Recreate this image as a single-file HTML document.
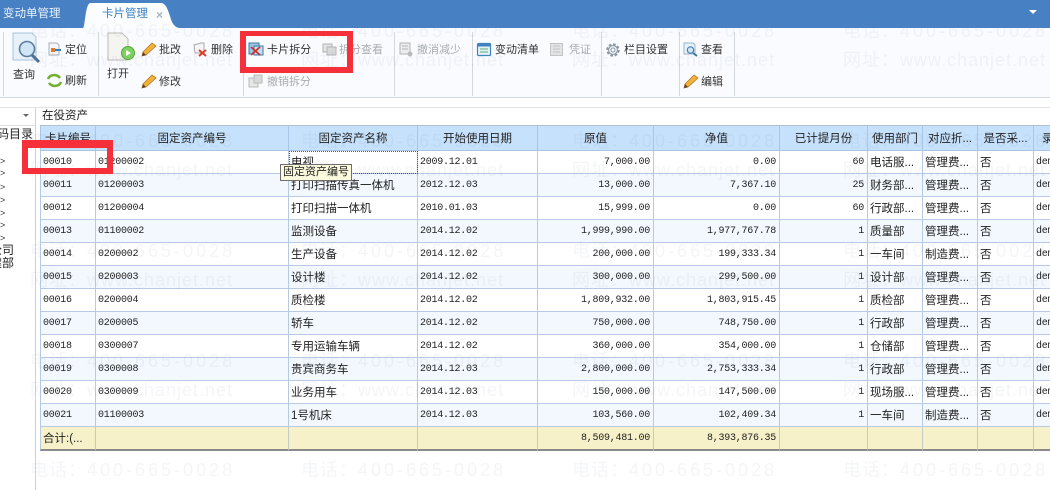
<!DOCTYPE html>
<html><head><meta charset="utf-8">
<style>
html,body{margin:0;padding:0;background:#fff}
#p{position:relative;width:1050px;height:490px;overflow:hidden;background:#fff;font-family:"Liberation Sans","WenQuanYi Zen Hei","Noto Sans CJK SC",sans-serif;font-size:11px;color:#222;filter:blur(.3px)}
.a{position:absolute}
.l{position:absolute;white-space:nowrap;font-size:11px;line-height:14px;color:#333}
.g{color:#a9adb0}
.s{position:absolute;top:32px;height:64px;width:1px;background:#d3d8dc}
table{border-collapse:separate;border-spacing:0;table-layout:fixed;width:1010px}
th{background:#c6e1fb;border-right:1px solid #a9c6e4;border-bottom:1px solid #a9c6e4;border-top:1px solid #b3c2d0;font-weight:normal;font-size:11.5px;color:#222;padding:0;overflow:hidden;white-space:nowrap;box-sizing:border-box;height:26px}
td{height:23px;box-sizing:border-box;border-right:1px solid #b6cae4;border-bottom:1px solid #b6cae4;padding:0 3px 0 2px;overflow:hidden;white-space:nowrap;font-size:11.5px;color:#222}
td:first-child{border-left:1px solid #b6cae4}
.n{font-family:"Liberation Mono",monospace;font-size:10px;letter-spacing:-.25px}
.r{text-align:right}
tr.e td{background:#f3f8fe}
tr.t td{background:#f7f1c9;border-right-color:#c4cbc0;border-bottom:2px solid #8b8b8b;height:24px}
td:last-child{padding-right:0;border-right:0}
.w{position:absolute;white-space:nowrap;font-size:18px;line-height:22px;letter-spacing:3px;color:rgba(110,125,150,.08)}
.w i{font-style:normal;letter-spacing:1px}
.w b{font-weight:normal;letter-spacing:1px}
.b{position:absolute;background:#f6303a}
svg{position:absolute;overflow:visible}
</style></head><body><div id="p">

<div class="a" style="left:0;top:0;width:1050px;height:28px;background:#4880c4"></div>
<div class="l" style="left:3px;top:7px;color:#e8f1fb;font-size:11.5px">变动单管理</div>
<svg style="left:82px;top:2px" width="100" height="27"><path d="M1 26 C3 26 3 3 8 1 L79 1 C85 1 87 12 90 20 C92 24 95 26 98 26 Z" fill="#fcfdff"/></svg>
<div class="l" style="left:102px;top:7px;color:#3d82c6;font-size:11.5px">卡片管理</div>
<div class="l" style="left:156px;top:8px;color:#a8b2bc;font-size:12px;font-weight:bold">×</div>
<svg style="left:1028px;top:9px" width="10" height="6"><path d="M1 1 L9 1 L5 5 Z" fill="#fff"/></svg>

<div class="a" style="left:0;top:28px;width:1050px;height:69px;background:#f9fbfe"></div>
<div class="a" style="left:0;top:97px;width:1050px;height:1px;background:#cfd7df"></div>
<div class="a" style="left:0;top:107px;width:1050px;height:1px;background:#dfe3e5"></div>

<div class="s" style="left:3px"></div><div class="s" style="left:98px"></div><div class="s" style="left:243px"></div><div class="s" style="left:394px"></div><div class="s" style="left:472px"></div><div class="s" style="left:601px"></div><div class="s" style="left:679px"></div><div class="s" style="left:734px"></div>

<!-- query -->
<svg style="left:12px;top:32px" width="30" height="32"><path d="M1 1 H20 L24 5 V28 H1 Z" fill="#e6f1fa" stroke="#a9c4da"/><circle cx="15" cy="17" r="7.5" fill="#cfe6f7" stroke="#5d7d9c" stroke-width="1.6"/><path d="M20 23 L27 30" stroke="#4a6f96" stroke-width="3"/></svg>
<div class="l" style="left:13px;top:68px">查询</div>
<svg style="left:48px;top:42px" width="14" height="14"><path d="M1 1 H9 L11 3 V13 H1 Z" fill="#f3f5f7" stroke="#a8b0b8"/><rect x="3" y="6" width="4" height="4" fill="#e07a30"/><path d="M7 8 H13" stroke="#2f80c8" stroke-width="2"/></svg>
<div class="l" style="left:65px;top:43px">定位</div>
<svg style="left:47px;top:73px" width="15" height="15"><path d="M1 6 C3 1 10 1 13 5 M14 9 C12 14 5 14 2 10" fill="none" stroke="#76b02e" stroke-width="2.6"/></svg>
<div class="l" style="left:65px;top:74px">刷新</div>
<!-- open -->
<svg style="left:107px;top:32px" width="28" height="32"><path d="M1 1 H15 L21 7 V28 H1 Z" fill="#f4f4f0" stroke="#bdbdb8"/><circle cx="21" cy="21" r="6.5" fill="#7ed15e" stroke="#59a63f"/><path d="M19 18 L24 21 L19 24 Z" fill="#fff"/></svg>
<div class="l" style="left:107px;top:67px">打开</div>
<svg style="left:141px;top:41px" width="16" height="16"><path d="M2 11 L11 2 L15 5 L5 14 L1 15 Z" fill="#f2b13a" stroke="#b57a22" stroke-width=".8"/><path d="M1 15 L2 11 L5 14 Z" fill="#543"/></svg>
<div class="l" style="left:159px;top:43px">批改</div>
<svg style="left:141px;top:73px" width="16" height="16"><path d="M2 11 L11 2 L15 5 L5 14 L1 15 Z" fill="#f2b13a" stroke="#b57a22" stroke-width=".8"/><path d="M1 15 L2 11 L5 14 Z" fill="#543"/></svg>
<div class="l" style="left:159px;top:75px">修改</div>
<svg style="left:193px;top:42px" width="15" height="15"><path d="M1 3 L8 1 H11 V11 H2 Z" fill="#f5f5f5" stroke="#aaa"/><path d="M6 8 L13 14 M13 8 L6 14" stroke="#e0392a" stroke-width="2"/></svg>
<div class="l" style="left:211px;top:43px">删除</div>
<!-- split -->
<svg style="left:248px;top:42px" width="16" height="15"><rect x="1" y="1" width="10" height="11" fill="#9cc6e6" stroke="#3f78a8"/><rect x="6" y="4" width="9" height="9" fill="#c4dcf0" stroke="#3f78a8"/><path d="M3 13 L12 5 M12 13 L3 5" stroke="#c8342c" stroke-width="1.8"/></svg>
<div class="l" style="left:267px;top:43px;letter-spacing:.1px">卡片拆分</div>
<svg style="left:322px;top:42px" width="15" height="15"><rect x="1" y="2" width="9" height="8" fill="#e4e6e6" stroke="#b0b4b4"/><rect x="5" y="5" width="9" height="8" fill="#d8dada" stroke="#b0b4b4"/></svg>
<div class="l g" style="left:339px;top:43px">拆分查看</div>
<svg style="left:248px;top:73px" width="15" height="16"><rect x="1" y="5" width="9" height="9" fill="#e4e6e6" stroke="#b8bcbc"/><rect x="6" y="2" width="8" height="8" fill="#d8dada" stroke="#b8bcbc"/></svg>
<div class="l g" style="left:267px;top:75px">撤销拆分</div>
<svg style="left:399px;top:42px" width="15" height="15"><path d="M1 1 H11 V12 H1 Z" fill="#eceeee" stroke="#b0b4b4"/><path d="M3 4 H9 M3 7 H9" stroke="#b0b4b4"/><circle cx="11" cy="12" r="2.5" fill="#b8bcbc"/></svg>
<div class="l g" style="left:417px;top:43px">撤消减少</div>
<svg style="left:477px;top:43px" width="14" height="13"><rect x=".5" y=".5" width="13" height="12" rx="1" fill="#e4f2f4" stroke="#3f82c0" stroke-width="1.2"/><rect x="1" y="1" width="12" height="2.5" fill="#3f82c0"/><path d="M3 6 H11 M3 9 H11" stroke="#5aa87a"/></svg>
<div class="l" style="left:495px;top:43px">变动清单</div>
<svg style="left:550px;top:43px" width="14" height="14"><rect x=".5" y=".5" width="12" height="12" fill="#e2e4e4" stroke="#c0c4c4"/><path d="M3 3 H10 M3 6 H10 M3 9 H10" stroke="#c0c4c4"/></svg>
<div class="l g" style="left:569px;top:43px">凭证</div>
<svg style="left:605px;top:42px" width="16" height="16"><circle cx="8" cy="8" r="5.5" fill="none" stroke="#8b98a4" stroke-width="2.4" stroke-dasharray="2.6 1.7"/><circle cx="8" cy="8" r="4.4" fill="#eef1f4" stroke="#8b98a4"/><circle cx="8" cy="8" r="2" fill="#fff" stroke="#8b98a4"/></svg>
<div class="l" style="left:624px;top:43px">栏目设置</div>
<svg style="left:683px;top:42px" width="15" height="15"><path d="M1 1 H10 L12 3 V12 H1 Z" fill="#e6f1fa" stroke="#9ab6cc"/><circle cx="7.5" cy="8" r="3.2" fill="#cfe6f7" stroke="#4f7ea8" stroke-width="1.2"/><path d="M10 11 L14 14" stroke="#3f78a8" stroke-width="2"/></svg>
<div class="l" style="left:701px;top:43px">查看</div>
<svg style="left:683px;top:73px" width="16" height="16"><path d="M2 11 L11 2 L15 5 L5 14 L1 15 Z" fill="#f2b13a" stroke="#b57a22" stroke-width=".8"/><path d="M1 15 L2 11 L5 14 Z" fill="#543"/></svg>
<div class="l" style="left:701px;top:75px">编辑</div>

<!-- left -->
<div class="a" style="left:35px;top:108px;width:1px;height:382px;background:#c6d3e0"></div>
<div class="a" style="left:0;top:125px;width:35px;height:1px;background:#dfe3e5"></div>
<svg style="left:23px;top:114px" width="7" height="4"><path d="M0 0 H6 L3 3 Z" fill="#666"/></svg>
<div class="l" style="left:-3px;top:127px;font-size:12px;color:#222">码目录</div>
<div class="l" style="left:0;top:154px;color:#333;font-size:9px">&gt;</div>
<div class="l" style="left:0;top:166px;color:#333;font-size:9px">&gt;</div>
<div class="l" style="left:0;top:180px;color:#333;font-size:9px">&gt;</div>
<div class="l" style="left:0;top:193px;color:#333;font-size:9px">&gt;</div>
<div class="l" style="left:0;top:206px;color:#333;font-size:9px">&gt;</div>
<div class="l" style="left:0;top:218px;color:#333;font-size:9px">&gt;</div>
<div class="l" style="left:0;top:231px;color:#333;font-size:9px">&gt;</div>
<div class="l" style="left:-10px;top:243px;color:#222;font-size:12px">公司</div>
<div class="l" style="left:-10px;top:256px;color:#222;font-size:12px">建部</div>

<div class="l" style="left:42px;top:109px;font-size:11.5px;color:#222">在役资产</div>

<div class="a" style="left:40px;top:125px;width:1010px;height:327px;overflow:hidden">
<table>
<colgroup><col style="width:56px"><col style="width:193px"><col style="width:129px"><col style="width:120px"><col style="width:116px"><col style="width:126px"><col style="width:88px"><col style="width:55px"><col style="width:55px"><col style="width:56px"><col style="width:16px"></colgroup>
<tr><th style="border-left:1px solid #a9c6e4">卡片编号</th><th>固定资产编号</th><th>固定资产名称</th><th>开始使用日期</th><th>原值</th><th>净值</th><th>已计提月份</th><th>使用部门</th><th>对应折...</th><th>是否采...</th><th style="border-right:0;text-align:left;padding-left:8px">录</th></tr>
<tr><td class="n">00010</td><td class="n">01200002</td><td style="outline:1px dotted #555;outline-offset:-1px">电视</td><td class="n">2009.12.01</td><td class="n r">7,000.00</td><td class="n r">0.00</td><td class="n r">60</td><td>电话服...</td><td>管理费...</td><td>否</td><td class="n">dem</td></tr>
<tr class="e"><td class="n">00011</td><td class="n">01200003</td><td>打印扫描传真一体机</td><td class="n">2012.12.03</td><td class="n r">13,000.00</td><td class="n r">7,367.10</td><td class="n r">25</td><td>财务部...</td><td>管理费...</td><td>否</td><td class="n">dem</td></tr>
<tr><td class="n">00012</td><td class="n">01200004</td><td>打印扫描一体机</td><td class="n">2010.01.03</td><td class="n r">15,999.00</td><td class="n r">0.00</td><td class="n r">60</td><td>行政部...</td><td>管理费...</td><td>否</td><td class="n">dem</td></tr>
<tr class="e"><td class="n">00013</td><td class="n">01100002</td><td>监测设备</td><td class="n">2014.12.02</td><td class="n r">1,999,990.00</td><td class="n r">1,977,767.78</td><td class="n r">1</td><td>质量部</td><td>管理费...</td><td>否</td><td class="n">dem</td></tr>
<tr><td class="n">00014</td><td class="n">0200002</td><td>生产设备</td><td class="n">2014.12.02</td><td class="n r">200,000.00</td><td class="n r">199,333.34</td><td class="n r">1</td><td>一车间</td><td>制造费...</td><td>否</td><td class="n">dem</td></tr>
<tr class="e"><td class="n">00015</td><td class="n">0200003</td><td>设计楼</td><td class="n">2014.12.02</td><td class="n r">300,000.00</td><td class="n r">299,500.00</td><td class="n r">1</td><td>设计部</td><td>管理费...</td><td>否</td><td class="n">dem</td></tr>
<tr><td class="n">00016</td><td class="n">0200004</td><td>质检楼</td><td class="n">2014.12.02</td><td class="n r">1,809,932.00</td><td class="n r">1,803,915.45</td><td class="n r">1</td><td>质检部</td><td>管理费...</td><td>否</td><td class="n">dem</td></tr>
<tr class="e"><td class="n">00017</td><td class="n">0200005</td><td>轿车</td><td class="n">2014.12.02</td><td class="n r">750,000.00</td><td class="n r">748,750.00</td><td class="n r">1</td><td>行政部</td><td>管理费...</td><td>否</td><td class="n">dem</td></tr>
<tr><td class="n">00018</td><td class="n">0300007</td><td>专用运输车辆</td><td class="n">2014.12.02</td><td class="n r">360,000.00</td><td class="n r">354,000.00</td><td class="n r">1</td><td>仓储部</td><td>管理费...</td><td>否</td><td class="n">dem</td></tr>
<tr class="e"><td class="n">00019</td><td class="n">0300008</td><td>贵宾商务车</td><td class="n">2014.12.03</td><td class="n r">2,800,000.00</td><td class="n r">2,753,333.34</td><td class="n r">1</td><td>行政部</td><td>管理费...</td><td>否</td><td class="n">dem</td></tr>
<tr><td class="n">00020</td><td class="n">0300009</td><td>业务用车</td><td class="n">2014.12.03</td><td class="n r">150,000.00</td><td class="n r">147,500.00</td><td class="n r">1</td><td>现场服...</td><td>管理费...</td><td>否</td><td class="n">dem</td></tr>
<tr class="e"><td class="n">00021</td><td class="n">01100003</td><td>1号机床</td><td class="n">2014.12.03</td><td class="n r">103,560.00</td><td class="n r">102,409.34</td><td class="n r">1</td><td>一车间</td><td>制造费...</td><td>否</td><td class="n">dem</td></tr>
<tr class="t"><td>合计:(...</td><td></td><td></td><td></td><td class="n r">8,509,481.00</td><td class="n r">8,393,876.35</td><td></td><td></td><td></td><td></td><td></td></tr>
</table>
</div>

<div class="a" style="left:280px;top:164px;width:70px;height:15px;background:#fdfbdd;border:1px solid #6f6f6f;font-size:11px;line-height:15px;text-align:center;color:#222;white-space:nowrap">固定资产编号</div>

<!-- watermark -->
<div class="w" style="left:30px;top:20px"><i>电话：</i>400-665-0028</div><div class="w" style="left:301px;top:20px"><i>电话：</i>400-665-0028</div><div class="w" style="left:572px;top:20px"><i>电话：</i>400-665-0028</div><div class="w" style="left:843px;top:20px"><i>电话：</i>400-665-0028</div>
<div class="w" style="left:30px;top:49px"><i>网址：</i><b>www.chanjet.net</b></div><div class="w" style="left:301px;top:49px"><i>网址：</i><b>www.chanjet.net</b></div><div class="w" style="left:572px;top:49px"><i>网址：</i><b>www.chanjet.net</b></div><div class="w" style="left:843px;top:49px"><i>网址：</i><b>www.chanjet.net</b></div>
<div class="w" style="left:30px;top:130px"><i>电话：</i>400-665-0028</div><div class="w" style="left:301px;top:130px"><i>电话：</i>400-665-0028</div><div class="w" style="left:572px;top:130px"><i>电话：</i>400-665-0028</div><div class="w" style="left:843px;top:130px"><i>电话：</i>400-665-0028</div>
<div class="w" style="left:30px;top:159px"><i>网址：</i><b>www.chanjet.net</b></div><div class="w" style="left:301px;top:159px"><i>网址：</i><b>www.chanjet.net</b></div><div class="w" style="left:572px;top:159px"><i>网址：</i><b>www.chanjet.net</b></div><div class="w" style="left:843px;top:159px"><i>网址：</i><b>www.chanjet.net</b></div>
<div class="w" style="left:30px;top:240px"><i>电话：</i>400-665-0028</div><div class="w" style="left:301px;top:240px"><i>电话：</i>400-665-0028</div><div class="w" style="left:572px;top:240px"><i>电话：</i>400-665-0028</div><div class="w" style="left:843px;top:240px"><i>电话：</i>400-665-0028</div>
<div class="w" style="left:30px;top:269px"><i>网址：</i><b>www.chanjet.net</b></div><div class="w" style="left:301px;top:269px"><i>网址：</i><b>www.chanjet.net</b></div><div class="w" style="left:572px;top:269px"><i>网址：</i><b>www.chanjet.net</b></div><div class="w" style="left:843px;top:269px"><i>网址：</i><b>www.chanjet.net</b></div>
<div class="w" style="left:30px;top:350px"><i>电话：</i>400-665-0028</div><div class="w" style="left:301px;top:350px"><i>电话：</i>400-665-0028</div><div class="w" style="left:572px;top:350px"><i>电话：</i>400-665-0028</div><div class="w" style="left:843px;top:350px"><i>电话：</i>400-665-0028</div>
<div class="w" style="left:30px;top:379px"><i>网址：</i><b>www.chanjet.net</b></div><div class="w" style="left:301px;top:379px"><i>网址：</i><b>www.chanjet.net</b></div><div class="w" style="left:572px;top:379px"><i>网址：</i><b>www.chanjet.net</b></div><div class="w" style="left:843px;top:379px"><i>网址：</i><b>www.chanjet.net</b></div>
<div class="w" style="left:30px;top:459px"><i>电话：</i>400-665-0028</div><div class="w" style="left:301px;top:459px"><i>电话：</i>400-665-0028</div><div class="w" style="left:572px;top:459px"><i>电话：</i>400-665-0028</div><div class="w" style="left:843px;top:459px"><i>电话：</i>400-665-0028</div>

<!-- red boxes -->
<div class="b" style="left:240px;top:31px;width:113px;height:5px"></div>
<div class="b" style="left:240px;top:67px;width:113px;height:6px"></div>
<div class="b" style="left:240px;top:31px;width:6px;height:42px"></div>
<div class="b" style="left:347px;top:31px;width:6px;height:42px"></div>
<div class="b" style="left:22px;top:140px;width:91px;height:8px"></div>
<div class="b" style="left:22px;top:168px;width:91px;height:6px"></div>
<div class="b" style="left:22px;top:140px;width:6px;height:34px"></div>
<div class="b" style="left:107px;top:140px;width:6px;height:34px"></div>

</div></body></html>
